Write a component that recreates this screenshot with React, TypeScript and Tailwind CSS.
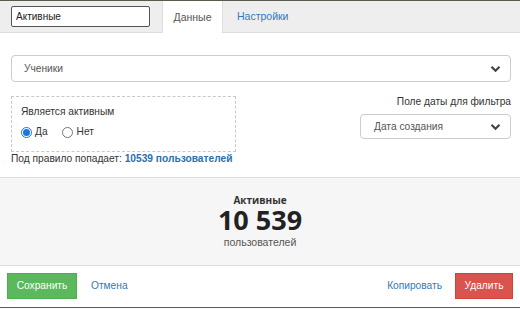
import React from "react";

const Chevron = () => (
  <svg width="11" height="8" viewBox="0 0 11 8" className="shrink-0">
    <path d="M1.5 1.8 L5.5 5.8 L9.5 1.8" fill="none" stroke="#444" strokeWidth="2.2" />
  </svg>
);

export default function App() {
  return (
    <div
      className="w-[520px] h-[309px] bg-white flex flex-col border-t border-[#5a5b4c] overflow-hidden text-[10.2px] leading-[12px] text-[#333]"
      style={{ fontFamily: '"Liberation Sans", Arial, sans-serif' }}
    >
      {/* header */}
      <div className="h-[32px] bg-[#eeeeee] border-b border-[#dddddd] flex items-end shrink-0">
        <div className="self-stretch flex items-center pl-[11px] pr-[12px]">
          <input
            defaultValue="Активные"
            className="w-[139px] h-[21px] border border-[#555] rounded-[2px] bg-white px-[4px] text-[10px] text-[#222] outline-none"
          />
        </div>
        <div className="h-[32px] -mb-px bg-white border-x border-[#dddddd] w-[61px] flex items-center justify-center text-[10.5px] text-[#555]">
          Данные
        </div>
        <div className="h-[32px] flex items-center pl-[14px] text-[10.5px] text-[#337ab7]">Настройки</div>
      </div>

      {/* body */}
      <div className="flex flex-col pl-[11px] pr-[9px] pt-[22px] h-[145px] shrink-0 border-b border-[#dddddd]">
        <div className="h-[27px] border border-[#cccccc] rounded-[4px] flex items-center justify-between pl-[12px] pr-[9px] text-[#555]">
          <span>Ученики</span>
          <Chevron />
        </div>
        <div className="flex justify-between mt-[14px]">
          <div className="flex flex-col">
            <div className="w-[225px] h-[56px] border border-dashed border-[#c8c8c8] flex flex-col pl-[9px] pt-[9px]">
              <div className="text-[#333]">Является активным</div>
              <div className="flex items-center mt-[8px]">
                <span className="w-[11px] h-[11px] rounded-full border border-[#1a73e8] flex items-center justify-center">
                  <span className="w-[7px] h-[7px] rounded-full bg-[#1a73e8]" />
                </span>
                <span className="ml-[3px]">Да</span>
                <span className="ml-[14px] w-[11px] h-[11px] rounded-full border border-[#767676]" />
                <span className="ml-[4px]">Нет</span>
              </div>
            </div>
            <div className="mt-[1px] text-[#333]">
              Под правило попадает: <span className="font-bold text-[#2a6fae]">10539 пользователей</span>
            </div>
          </div>
          <div className="flex flex-col items-end">
            <div className="text-[#333]">Поле даты для фильтра</div>
            <div className="mt-[6px] w-[151px] h-[25px] border border-[#cccccc] rounded-[4px] flex items-center justify-between pl-[13px] pr-[9px] text-[#555]">
              <span>Дата создания</span>
              <Chevron />
            </div>
          </div>
        </div>
      </div>

      {/* stats */}
      <div className="h-[88px] bg-[#f6f6f6] border-b border-[#dddddd] flex flex-col items-center pt-[16px] shrink-0">
        <div className="font-bold text-[10px] text-[#333] leading-[12px]" style={{ fontFamily: '"Open Sans", sans-serif' }}>
          Активные
        </div>
        <div
          className="font-bold text-[27px] leading-[28px] text-[#222]"
          style={{ fontFamily: '"Open Sans", sans-serif' }}
        >
          10 539
        </div>
        <div className="text-[10.5px] text-[#555] mt-[2px]">пользователей</div>
      </div>

      {/* footer */}
      <div className="flex items-start justify-between px-[7px] pt-[7px] h-[42px] shrink-0 border-b border-[#5a5b4c]">
        <div className="flex items-center">
          <div className="w-[70px] h-[26px] bg-[#5cb85c] border border-[#4cae4c] text-white flex items-center justify-center">
            Сохранить
          </div>
          <div className="ml-[14px] text-[#337ab7]">Отмена</div>
        </div>
        <div className="flex items-center">
          <div className="text-[#337ab7]">Копировать</div>
          <div className="ml-[13px] w-[58px] h-[26px] bg-[#d9534f] border border-[#d43f3a] text-white flex items-center justify-center">
            Удалить
          </div>
        </div>
      </div>
    </div>
  );
}
